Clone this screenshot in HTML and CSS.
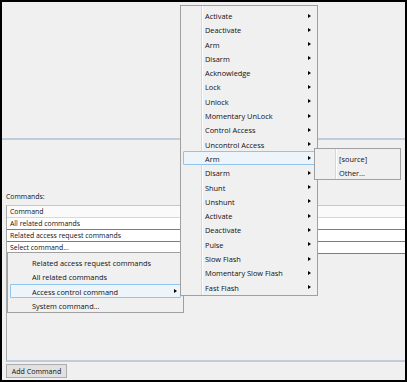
FILE: index.html
```html
<!DOCTYPE html>
<html lang="en">
<head>
  <meta charset="UTF-8" />
  <title>Commands</title>
  <link rel="stylesheet" href="styles.css">
</head>
<body>

<div class="window">
  <div class="top-panel"></div>

  <div class="commands">
    <div class="label">Commands:</div>
    <div class="grid">
      <div class="grid-head">Command</div>
      <div class="grid-row">All related commands</div>
      <div class="grid-row">Related access request commands</div>
      <div class="grid-row">Select command...</div>
    </div>
  </div>

  <div class="bottom-bar">
    <button class="btn-add">Add Command</button>
  </div>

  <!-- dropdown from "Select command..." -->
  <div class="menu menu-select">
    <div class="item">Related access request commands</div>
    <div class="item">All related commands</div>
    <div class="item sub active">Access control command</div>
    <div class="item">System command...</div>
  </div>

  <!-- access control submenu -->
  <div class="menu menu-access gutter">
    <div class="item sub">Activate</div>
    <div class="item sub">Deactivate</div>
    <div class="item sub">Arm</div>
    <div class="item sub">Disarm</div>
    <div class="item sub">Acknowledge</div>
    <div class="item sub">Lock</div>
    <div class="item sub">Unlock</div>
    <div class="item sub">Momentary UnLock</div>
    <div class="item sub">Control Access</div>
    <div class="item sub">Uncontrol Access</div>
    <div class="item sub active">Arm</div>
    <div class="item sub">Disarm</div>
    <div class="item sub">Shunt</div>
    <div class="item sub">Unshunt</div>
    <div class="item sub">Activate</div>
    <div class="item sub">Deactivate</div>
    <div class="item sub">Pulse</div>
    <div class="item sub">Slow Flash</div>
    <div class="item sub">Momentary Slow Flash</div>
    <div class="item sub">Fast Flash</div>
  </div>

  <!-- source submenu -->
  <div class="menu menu-source gutter">
    <div class="item">[source]</div>
    <div class="item">Other...</div>
  </div>
</div>

</body>
</html>
```

FILE: styles.css
```css
* { box-sizing: border-box; }
body, html {
  margin: 0;
  padding: 0;
  background: #000;
  font-family: "Open Sans", "Noto Sans", sans-serif;
  font-size: 7.4px;
  color: #111;
}
.window {
  position: relative;
  width: 407px;
  height: 382px;
  border: 2px solid #000;
  background: #f0f0f0;
  display: flex;
  flex-direction: column;
  overflow: hidden;
}
.top-panel {
  height: 138px;
  flex: none;
  border-bottom: 2px solid #bfccd9;
}
.commands {
  flex: 1;
  display: flex;
  flex-direction: column;
}
.label {
  margin: 52px 0 0 4px;
  height: 13px;
  line-height: 10px;
  font-size: 6.9px;
}
.grid {
  flex: 1;
  margin-left: 4px;
  border-left: 1px solid #a9a9a9;
  border-top: 1px solid #b9c9d9;
  border-bottom: 2px solid #bfccd9;
  font-size: 6.9px;
}
.grid-head {
  height: 12px;
  line-height: 11px;
  padding-left: 3px;
  background: #fafafa;
  border-bottom: 1px solid #d8d8d8;
}
.grid-row {
  height: 12px;
  line-height: 11px;
  padding-left: 3px;
  background: #fff;
  border-bottom: 1px solid #7d7d7d;
}
.bottom-bar {
  height: 18px;
  flex: none;
  padding: 2px 0 2px 4px;
}
.btn-add {
  width: 61px;
  height: 14px;
  padding: 0;
  margin: 0;
  background: #e1e1e1;
  border: 1px solid #adadad;
  font-family: inherit;
  font-size: 7.1px;
  line-height: 12px;
  color: #111;
}

/* context menus */
.menu {
  position: absolute;
  background: #f0f0f0;
  border: 1px solid #a0a0a0;
  padding: 2px;
}
.menu.gutter {
  background: linear-gradient(to right, #f0f0f0 20px, #d7d7d7 20px, #d7d7d7 21px, #fff 21px, #fff 22px, #f0f0f0 22px);
}
.menu .item {
  position: relative;
  height: 14.3px;
  line-height: 14px;
  padding-left: 21px;
  white-space: nowrap;
  border: 1px solid transparent;
}
.menu .item.sub::after {
  content: "";
  position: absolute;
  right: 3px;
  top: 4.5px;
  border-left: 3px solid #000;
  border-top: 2.5px solid transparent;
  border-bottom: 2.5px solid transparent;
}
.menu .item.active {
  border-color: #8fc4ec;
  background: #edf4fa;
  border-radius: 1px;
}
.menu-access {
  left: 178px;
  top: 3px;
  width: 138px;
  padding-bottom: 1px;
}
.menu-source {
  left: 312px;
  top: 146px;
  width: 87px;
  padding-bottom: 0;
}
.menu-source .item { height: 14px; }
.menu-select {
  left: 5px;
  top: 250px;
  width: 177px;
  padding-bottom: 0;
}
```
